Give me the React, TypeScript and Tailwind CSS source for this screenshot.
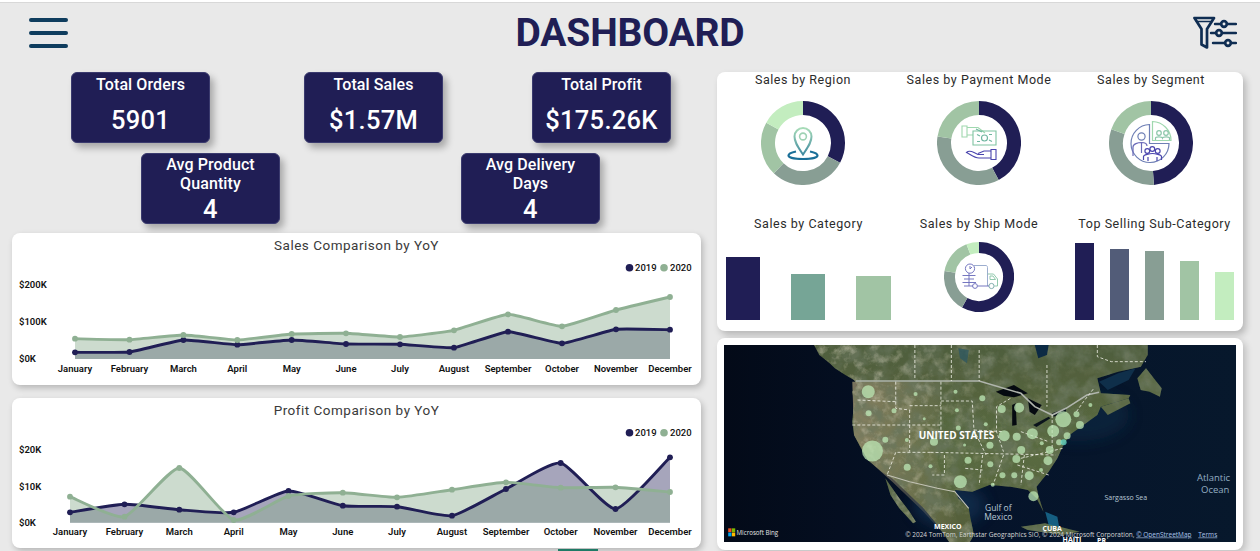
import React from "react";

const NAVY = "#201e55";
const GRAY = "#889e94";
const LIGHT = "#a1c4a4";
const PALE = "#c3edbf";
const FONT = "Roboto, 'Liberation Sans', sans-serif";

const MONTHS = ["January","February","March","April","May","June","July","August","September","October","November","December"];

function smooth(pts: number[][], t = 0.14) {
  let d = `M${pts[0][0]} ${pts[0][1]}`;
  for (let i = 0; i < pts.length - 1; i++) {
    const p0 = pts[Math.max(0, i - 1)], p1 = pts[i], p2 = pts[i + 1], p3 = pts[Math.min(pts.length - 1, i + 2)];
    d += `C${p1[0] + (p2[0] - p0[0]) * t} ${p1[1] + (p2[1] - p0[1]) * t} ${p2[0] - (p3[0] - p1[0]) * t} ${p2[1] - (p3[1] - p1[1]) * t} ${p2[0]} ${p2[1]}`;
  }
  return d;
}

type ChartProps = {
  title: string; vb: string; xs: number[]; a: number[]; b: number[]; base: number; tension: number;
  legendY: number; monthY: number; yLabels: [string, number][];
};

function LineChart({ title, vb, xs, a, b, base, tension, legendY, monthY, yLabels }: ChartProps) {
  const pa = xs.map((x, i) => [x, a[i]]);
  const pb = xs.map((x, i) => [x, b[i]]);
  const la = smooth(pa, tension), lb = smooth(pb, tension);
  const close = `L${xs[11]} ${base}L${xs[0]} ${base}Z`;
  const [, , w, h] = vb.split(" ").map(Number);
  return (
    <div className="bg-white rounded-lg shadow-[2px_3px_6px_rgba(0,0,0,0.22)] flex flex-col overflow-hidden">
      <div className="h-[24px] flex items-center justify-center text-[13.5px] tracking-[0.5px] text-[#3a3a3a]">{title}</div>
      <svg viewBox={vb} width={w} height={h} className="block">
        <path d={la + close} fill={NAVY} opacity={0.4} />
        <path d={lb + close} fill="#8fb093" opacity={0.45} />
        <path d={la} fill="none" stroke={NAVY} strokeWidth={2.9} />
        {pa.map((p, i) => <circle key={i} cx={p[0]} cy={p[1]} r={2.9} fill={NAVY} />)}
        <path d={lb} fill="none" stroke="#8fb093" strokeWidth={2.9} />
        {pb.map((p, i) => <circle key={i} cx={p[0]} cy={p[1]} r={2.9} fill="#8fb093" />)}
        <g fontFamily={FONT} fontSize={9.5} fontWeight={600} fill="#111">
          {yLabels.map(([t, y]) => <text key={t} x={19} y={y + 3}>{t}</text>)}
          {MONTHS.map((m, i) => <text key={m} x={xs[i]} y={monthY + 3} textAnchor="middle">{m}</text>)}
          <circle cx={629.5} cy={legendY} r={3.8} fill={NAVY} />
          <text x={635} y={legendY + 3.5} fontWeight={500}>2019</text>
          <circle cx={664} cy={legendY} r={3.8} fill="#8fb093" />
          <text x={670} y={legendY + 3.5} fontWeight={500}>2020</text>
        </g>
      </svg>
    </div>
  );
}

function arc(cx: number, cy: number, r: number, a0: number, a1: number) {
  const pt = (a: number) => [cx + r * Math.sin((a * Math.PI) / 180), cy - r * Math.cos((a * Math.PI) / 180)];
  const [x0, y0] = pt(a0), [x1, y1] = pt(a1);
  return `M${x0} ${y0}A${r} ${r} 0 ${a1 - a0 > 180 ? 1 : 0} 1 ${x1} ${y1}`;
}

function Donut({ size, stops, colors, width, children }: { size: number; stops: number[]; colors: string[]; width: number; children?: React.ReactNode }) {
  const c = size / 2, r = c - width / 2;
  return (
    <svg viewBox={`0 0 ${size} ${size}`} width={size} height={size} className="block">
      {colors.map((col, i) => (
        <path key={i} d={arc(c, c, r, stops[i], stops[i + 1])} fill="none" stroke={col} strokeWidth={width} />
      ))}
      {children}
    </svg>
  );
}

function Kpi({ title, value, tall }: { title: string; value: string; tall?: boolean }) {
  return (
    <div className={`w-[139px] h-[71px] rounded-md bg-[#201e55] border border-[#3a3a6e] shadow-[4px_5px_7px_rgba(0,0,0,0.28)] text-white text-center flex flex-col items-center ${tall ? "pt-[1px]" : "pt-[2px]"}`}>
      <div className="text-[16px] leading-[19px] font-medium tracking-[0.1px] w-[110px]">{title}</div>
      <div className={`text-[25.5px] leading-[32px] font-medium tracking-[0.3px] ${tall ? "" : "mt-[10px]"}`}>{value}</div>
    </div>
  );
}

function ChartTitle({ children }: { children: React.ReactNode }) {
  return <div className="h-[16px] flex items-center justify-center text-[12.5px] tracking-[0.55px] whitespace-nowrap text-[#2b2b2b]">{children}</div>;
}

function PinIcon() {
  return (
    <g fill="none">
      <defs>
        <linearGradient id="pg" x1="0" y1="0" x2="0" y2="1">
          <stop offset="0" stopColor="#a8dcb8" />
          <stop offset="1" stopColor="#3f8aa0" />
        </linearGradient>
      </defs>
      <path d="M42 53.5C37 46 33.5 41.5 33.5 35.5A8.5 8.5 0 0 1 50.5 35.5C50.5 41.5 47 46 42 53.5Z" stroke="url(#pg)" strokeWidth={2} />
      <circle cx={42} cy={35.5} r={3.4} stroke="#9fd2b4" strokeWidth={1.6} />
      <path d="M35 50.5C30 51.5 27.5 52.8 27.5 54.5C27.5 56.8 34 58 42 58S56.5 56.8 56.5 54.5C56.5 52.8 54 51.5 49 50.5" stroke="#1a6f98" strokeWidth={2.2} />
    </g>
  );
}

function MoneyIcon() {
  return (
    <g fill="none" strokeWidth={1.1}>
      <path d="M25 25H30V36H25ZM30 26.5H41L48 32M30 34H36" stroke="#9fd8ae" />
      <path d="M36 30H59V44H36Z" stroke="#7fc4a2" />
      <circle cx={47.5} cy={37} r={3} stroke="#6fb6a0" />
      <path d="M40 33.5L43 35M55 40.5L52 39M40 40.5H43M52 33.5H55M39 28L45 31" stroke="#6fb6a0" />
      <path d="M54 48.5H59V58.5H54ZM54 50H47L41 52.5M54 57H42C37 57 33 53 29.5 51.5C31 50 34 50 37 51.5L41 53.5H47" stroke="#4a45ae" />
    </g>
  );
}

function SegmentIcon() {
  return (
    <g fill="none" strokeWidth={1.2}>
      <path d="M40.5 23.5A19 19 0 1 0 60 42.5H40.5Z" stroke="#6e7fb5" />
      <path d="M43.5 20.5V39.5H62A19 19 0 0 0 43.5 20.5Z" stroke="#9fd8ae" />
      <circle cx={32.5} cy={35.5} r={3.6} stroke="#6e7fb5" />
      <path d="M24 55V46C24 43 29 41.5 32.5 41.5C36 41.5 38 43 38 45M32.5 41.5V52" stroke="#6a6ab8" />
      <circle cx={50} cy={32} r={2.3} stroke="#8cc6aa" /><circle cx={57} cy={32} r={2.3} stroke="#8cc6aa" />
      <path d="M46.5 39V37C46.5 35.5 53 35.5 53.5 37C54 35.5 60.5 35.5 60.5 37V39" stroke="#8cc6aa" />
      <circle cx={38.3} cy={50} r={2.4} stroke="#4a45ae" /><circle cx={43.3} cy={48} r={2.4} stroke="#4a45ae" /><circle cx={48.7} cy={50} r={2.4} stroke="#4a45ae" />
      <path d="M34.5 59V55.5C34.5 54 41 52.5 43.5 52.5C46 52.5 52.5 54 52.5 55.5V59" stroke="#4a45ae" />
      <path d="M39 60V56M48 60V56" stroke="#4a45ae" />
    </g>
  );
}

function TruckIcon() {
  return (
    <g fill="none" strokeWidth={0.95} stroke="#6e70bd">
      <circle cx={26} cy={26.6} r={4.6} />
      <path d="M26 24V27L28 25" />
      <path d="M18.5 33.5H31.5M20 37H30M18.5 40.5H32M25 31V44M20 44H29" />
      <path d="M30 23.5H42C43 23.5 43.5 24.5 43.5 25.5V44" stroke="#97a9cc" />
      <path d="M43.5 32H49.5L53.5 37V44H50.5" stroke="#8cc6aa" />
      <path d="M46 34H49L51.5 37.5H46Z" stroke="#8cc6aa" />
      <circle cx={31} cy={44} r={2.4} />
      <circle cx={47.5} cy={44} r={2.6} stroke="#7aa8a8" />
      <path d="M33.5 44H45" />
    </g>
  );
}

const BUBBLES: [number, number, number][] = [
  [441,170,6.5],[453,348,10.5],[706,440,6.5],[1002,253,8],[832,302,5.5],[913,296,5.5],[973,288,6],[916,484,5],[875,218,5],[825,222,4],
  [868,305,4],[881,345,4],[963,345,4],[958,377,4.5],[867,372,4],[904,422,4.5],[728,376,3.5],[553,397,3.5],[630,320,4],[791,331,3.5],
  [792,388,3],[827,421,3],[861,421,3],[490,314,3],[442,235,3],[515,227,2.5],[577,177,2],[692,170,2],[769,190,3],[696,226,2],[602,251,1.5],
  [700,279,2.5],[779,268,2],[552,315,2],[620,394,2],[1040,238,3],[1050,270,4],[1013,302,3.5],[990,322,3],[1080,210,2],[938,405,2],[799,449,2],[940,325,2],[718,330,1.5],
];
const zx = (x: number) => 715 + x / 2.877 - 724;
const zy = (y: number) => 335 + y / 3 - 345;
const MAP_T = `translate(${zx(0)} ${zy(0)}) scale(${1 / 2.877} ${1 / 3})`;

const LAND = "285,30 300,60 330,85 345,100 375,120 400,135 410,150 395,170 400,200 395,260 400,300 420,340 440,375 480,410 510,430 560,480 600,520 640,570 675,623 732,623 745,600 735,550 730,520 700,490 690,465 740,470 790,450 850,455 900,465 925,490 945,530 930,480 925,455 960,410 985,370 1000,335 1020,300 1060,270 1100,240 1110,215 1190,190 1195,180 1110,175 1100,130 1160,110 1225,95 1245,60 1245,30";
const EXTRA = [
  "490,430 530,490 560,530 578,560 570,565 530,520 505,480",
  "1215,130 1240,100 1285,160 1280,185 1250,170 1225,165",
  "1110,215 1190,190 1195,205 1130,240",
  "880,575 950,565 1050,590 1000,600 900,585",
];
const STATES = [
  "575,30 575,135","680,30 680,138","760,45 760,138","955,90 955,215","1100,30 1100,65 1140,80 1240,80",
  "520,140 520,220 560,225","650,140 650,285","410,195 520,200","650,198 740,198 745,285","560,212 650,212","395,270 650,270",
  "560,225 560,350","745,285 780,360","620,352 980,360","525,352 620,352","520,352 495,420","660,360 660,420 625,420","770,360 760,450",
  "830,360 800,450","890,360 880,450","850,190 810,215 810,290 830,350","970,240 970,340","1000,340 880,370","870,390 960,420","720,400 770,405",
  "745,285 830,290","880,290 960,320","1040,230 1060,200 1090,160",
];

function MapView() {
  return (
    <svg viewBox="0 0 512 197" width={512} height={197} className="block">
      <defs>
        <linearGradient id="sea" x1="0" y1="0" x2="1" y2="0">
          <stop offset="0" stopColor="#030a18" />
          <stop offset="0.5" stopColor="#05132a" />
          <stop offset="1" stopColor="#07182c" />
        </linearGradient>
        <linearGradient id="landg" x1="0" y1="0" x2="0" y2="1">
          <stop offset="0" stopColor="#4f5d3c" />
          <stop offset="0.55" stopColor="#5a6b40" />
          <stop offset="1" stopColor="#525c38" />
        </linearGradient>
        <linearGradient id="west" x1="0" y1="0" x2="1" y2="0">
          <stop offset="0" stopColor="#8f8568" stopOpacity="0.85" />
          <stop offset="1" stopColor="#8f8568" stopOpacity="0" />
        </linearGradient>
        <linearGradient id="maskg" x1="0" y1="0" x2="1" y2="0">
          <stop offset="0.15" stopColor="#fff" />
          <stop offset="0.5" stopColor="#fff" stopOpacity="0.35" />
          <stop offset="0.75" stopColor="#fff" stopOpacity="0.1" />
        </linearGradient>
        <mask id="westmask">
          <rect width={512} height={197} fill="url(#maskg)" />
        </mask>
        <filter id="soft" x="-5%" y="-5%" width="110%" height="110%">
          <feGaussianBlur stdDeviation="0.5" />
        </filter>
        <filter id="glow" x="-30%" y="-30%" width="160%" height="160%">
          <feGaussianBlur stdDeviation="7" />
        </filter>
        <filter id="noiseDark" x="0" y="0" width="100%" height="100%">
          <feTurbulence type="fractalNoise" baseFrequency="0.055" numOctaves={4} seed={7} />
          <feColorMatrix values="0 0 0 0 0.14  0 0 0 0 0.18  0 0 0 0 0.11  2.6 0 0 0 -1" />
        </filter>
        <filter id="noiseLight" x="0" y="0" width="100%" height="100%">
          <feTurbulence type="fractalNoise" baseFrequency="0.1" numOctaves={4} seed={21} />
          <feColorMatrix values="0 0 0 0 0.74  0 0 0 0 0.69  0 0 0 0 0.55  2.6 0 0 0 -1.25" />
        </filter>
        <clipPath id="landclip">
          <polygon points={LAND} transform={MAP_T} />
          {EXTRA.map((p) => <polygon key={p} points={p} transform={MAP_T} />)}
        </clipPath>
      </defs>
      <rect width={512} height={197} fill="url(#sea)" />
      <g filter="url(#glow)" opacity={0.6}>
        <ellipse cx={225} cy={160} rx={36} ry={22} fill="#12385a" />
        <ellipse cx={355} cy={70} rx={50} ry={26} fill="#0c2a44" />
      </g>
      <g transform={MAP_T} filter="url(#soft)">
        <polygon points={LAND} fill="url(#landg)" />
        <polygon points="395,140 650,140 640,380 720,623 680,623 600,530 510,440 440,375 400,300" fill="url(#west)" />
        {EXTRA.map((p) => <polygon key={p} points={p} fill="#5b6a46" />)}
      </g>
      <g clipPath="url(#landclip)">
        <rect width={512} height={197} filter="url(#noiseDark)" opacity={0.8} />
        <g mask="url(#westmask)">
          <rect width={512} height={197} filter="url(#noiseLight)" opacity={0.6} />
        </g>
      </g>
      <g transform={MAP_T}>
        <polygon points="950,530 985,545 990,575 960,570" fill="#1f7ea6" opacity={0.7} filter="url(#soft)" />
        <polygon points="920,30 960,30 955,60 930,70" fill="#0c2a44" />
        <polygon points="700,40 730,45 725,85 705,70" fill="#2a5562" opacity={0.7} />
        <polygon points="1105,140 1160,115 1210,100 1190,135 1130,165" fill="#0f2f4a" />
        <polygon points="808,170 860,150 900,175 860,187 830,182" fill="#050a10" />
        <polygon points="855,210 865,205 868,270 855,272" fill="#050a10" />
        <polygon points="900,190 940,210 920,240 905,230" fill="#050a10" />
        <polygon points="915,270 960,245 965,250 925,276" fill="#0b141c" />
        <polygon points="970,235 1010,220 1010,230 975,245" fill="#0b141c" />
        <polyline points="405,138 760,138 880,175 920,215 970,240 1010,220 1070,180 1105,172" fill="none" stroke="#b0b5ad" strokeWidth={1.6} vectorEffect="non-scaling-stroke" />
        <polyline points="495,420 560,440 640,460 690,470 730,520" fill="none" stroke="#c3c3b5" strokeWidth={1.1} vectorEffect="non-scaling-stroke" />
        {STATES.map((s) => (
          <polyline key={s} points={s} fill="none" stroke="#f2f2ea" strokeWidth={0.8} strokeDasharray="3 2" vectorEffect="non-scaling-stroke" />
        ))}
      </g>
      {BUBBLES.map(([x, y, r], i) => (
        <circle key={i} cx={zx(x)} cy={zy(y)} r={r} fill="#bde8b5" opacity={0.75} />
      ))}
      <circle cx={zx(1003)} cy={zy(322)} r={3} fill="#63d2c0" opacity={0.8} />
      <g fontFamily="'Open Sans', 'Liberation Sans', sans-serif">
        <text x={zx(695)} y={zy(301) + 3.5} textAnchor="middle" fontSize={10} fontWeight={700} fill="#fff">UNITED STATES</text>
        <text x={zx(815)} y={zy(518) + 3} textAnchor="middle" fontSize={8.5} fill="#b9c9d6">Gulf of</text>
        <text x={zx(815)} y={zy(546) + 3} textAnchor="middle" fontSize={8.5} fill="#b9c9d6">Mexico</text>
        <text x={zx(1182)} y={zy(488) + 2.5} textAnchor="middle" fontSize={7} fill="#b9c9d6">Sargasso Sea</text>
        <text x={zx(1482)} y={zy(428) + 3.5} textAnchor="end" fontSize={9.5} fill="#93adc2">Atlantic</text>
        <text x={zx(1480)} y={zy(462) + 3.5} textAnchor="end" fontSize={9.5} fill="#93adc2">Ocean</text>
        <text x={zx(670)} y={zy(575) + 2.5} textAnchor="middle" fontSize={7} fontWeight={700} fill="#fff">MEXICO</text>
        <text x={zx(970)} y={zy(581) + 2.5} textAnchor="middle" fontSize={7} fontWeight={700} fill="#fff">CUBA</text>
        <text x={zx(1027)} y={zy(613) + 2.5} textAnchor="middle" fontSize={7} fontWeight={700} fill="#fff">HAITI</text>
        <text x={zx(1112)} y={zy(617) + 2.5} textAnchor="middle" fontSize={7} fontWeight={700} fill="#fff">PR</text>
        <text x={zx(62)} y={zy(592) + 2.5} fontSize={6.2} fill="#e6e6e6">Microsoft Bing</text>
        <text x={zx(547)} y={zy(598) + 2.2} fontSize={6.5} fill="#d5d5d5">© 2024 TomTom, Earthstar Geographics SIO, © 2024 Microsoft Corporation, <tspan fill="#aac4ea" textDecoration="underline">© OpenStreetMap</tspan>  <tspan dx={5} fill="#aac4ea" textDecoration="underline">Terms</tspan></text>
      </g>
      <rect x={zx(38)} y={zy(580)} width={3.3} height={3.8} fill="#f25022" />
      <rect x={zx(38) + 3.7} y={zy(580)} width={3.3} height={3.8} fill="#7fba00" />
      <rect x={zx(38)} y={zy(580) + 4.2} width={3.3} height={3.8} fill="#00a4ef" />
      <rect x={zx(38) + 3.7} y={zy(580) + 4.2} width={3.3} height={3.8} fill="#ffb900" />
    </svg>
  );
}

export default function App() {
  return (
    <div className="relative w-[1260px] h-[551px] overflow-hidden bg-[#e9e9e9]" style={{ fontFamily: FONT }}>
      <div className="h-[3px] bg-white border-b border-[#d8d8d8]" />
      <header className="h-[69px] grid grid-cols-[1fr_auto_1fr] items-center pb-[10px]">
        <div className="pl-[29px] flex flex-col gap-[9px]">
          <div className="w-[39px] h-[4px] rounded-full bg-[#0f3d5e]" />
          <div className="w-[39px] h-[4px] rounded-full bg-[#0f3d5e]" />
          <div className="w-[39px] h-[4px] rounded-full bg-[#0f3d5e]" />
        </div>
        <h1 className="text-[39px] leading-[44px] font-bold text-[#201e55] tracking-[-0.2px]">DASHBOARD</h1>
        <div className="flex justify-end pr-[23px]">
          <svg viewBox="0 0 44 34" width={44} height={34} fill="none" stroke="#0f2d52" strokeWidth={2.7} strokeLinejoin="round" strokeLinecap="round">
            <path d="M1.5 2H21L14 13V31.5L8.5 28.5V13Z" />
            <path d="M3.5 5.5H19" strokeWidth={1.6} />
            <path d="M22 8H43M18 17H43M20 27H43" strokeWidth={2.4} />
            <circle cx={31} cy={8} r={2.8} fill="#e9e9e9" />
            <circle cx={26} cy={17} r={2.8} fill="#e9e9e9" />
            <circle cx={35} cy={27} r={2.8} fill="#e9e9e9" />
          </svg>
        </div>
      </header>

      <main className="flex pl-[12px]">
        <section className="w-[689px] flex flex-col">
          <div className="flex pl-[59px]">
            <Kpi title="Total Orders" value="5901" />
            <div className="ml-[94px]"><Kpi title="Total Sales" value="$1.57M" /></div>
            <div className="ml-[89px]"><Kpi title="Total Profit" value="$175.26K" /></div>
          </div>
          <div className="flex pl-[129px] mt-[10px]">
            <Kpi tall title="Avg Product Quantity" value="4" />
            <div className="ml-[181px]"><Kpi tall title="Avg Delivery Days" value="4" /></div>
          </div>
          <div className="mt-[9px]">
            <LineChart
              title="Sales Comparison by YoY"
              vb="12 257 689 128"
              xs={[75,129.5,183.4,237.3,291.7,346,400,454,508,562,616,670]}
              a={[352.3,352,340,344.7,340,344,344.3,347.7,331.7,343.3,329.3,329.7]}
              b={[338.7,339.7,335,340,334,333.3,337,330.3,314.3,326.3,310,297]}
              base={359}
              tension={0.06}
              legendY={267.7}
              monthY={369}
              yLabels={[["$200K",284.5],["$100K",321.5],["$0K",359]]}
            />
          </div>
          <div className="mt-[13px]">
            <LineChart
              title="Profit Comparison by YoY"
              vb="12 422 689 126"
              xs={[70,124.5,179.3,233.7,288.5,342.8,397,452,506,560.7,615.5,670]}
              a={[512.3,504.3,509.7,512.3,491,505.7,506.7,515.7,489,463,509,457.3]}
              b={[496.7,516.7,468,520,496,492.7,497.3,489.7,482.3,487.7,487.3,492]}
              base={522.7}
              tension={0.09}
              legendY={432.7}
              monthY={532}
              yLabels={[["$20K",449.5],["$10K",486.5],["$0K",522.7]]}
            />
          </div>
        </section>

        <section className="ml-[16px] w-[526px] flex flex-col">
          <div className="h-[259px] bg-white rounded-lg shadow-[3px_4px_7px_rgba(0,0,0,0.22)]">
            <div className="flex">
              <div className="w-[172px] flex flex-col items-center">
                <ChartTitle>Sales by Region</ChartTitle>
                <div className="mt-[13px]"><Donut size={84} width={14} stops={[0,118,224,299,360]} colors={[NAVY,GRAY,LIGHT,PALE]}><PinIcon /></Donut></div>
              </div>
              <div className="w-[180px] flex flex-col items-center">
                <ChartTitle>Sales by Payment Mode</ChartTitle>
                <div className="mt-[13px]"><Donut size={84} width={14} stops={[0,152,279,360]} colors={[NAVY,GRAY,LIGHT]}><MoneyIcon /></Donut></div>
              </div>
              <div className="w-[164px] flex flex-col items-center">
                <ChartTitle>Sales by Segment</ChartTitle>
                <div className="mt-[13px]"><Donut size={84} width={14} stops={[0,176,289,360]} colors={[NAVY,GRAY,LIGHT]}><SegmentIcon /></Donut></div>
              </div>
            </div>
            <div className="flex mt-[31px] pl-[9px]">
              <div className="w-[165px]">
                <ChartTitle>Sales by Category</ChartTitle>
                <div className="mt-[8px] h-[80px] flex items-end justify-between">
                  <div className="w-[34px] h-[63px] bg-[#201e55]" />
                  <div className="w-[34px] h-[46px] bg-[#76a596]" />
                  <div className="w-[35px] h-[44px] bg-[#a1c4a4]" />
                </div>
              </div>
              <div className="w-[176px] flex flex-col items-center">
                <ChartTitle>Sales by Ship Mode</ChartTitle>
                <div className="mt-[10px]"><Donut size={70} width={11} stops={[0,209,280,339,360]} colors={[NAVY,GRAY,LIGHT,PALE]}><TruckIcon /></Donut></div>
              </div>
              <div className="ml-[8px] w-[159px]">
                <ChartTitle>Top Selling Sub-Category</ChartTitle>
                <div className="mt-[8px] h-[80px] flex items-end justify-between">
                  <div className="w-[19px] h-[77px] bg-[#201e55]" />
                  <div className="w-[19px] h-[71px] bg-[#525c78]" />
                  <div className="w-[19px] h-[69px] bg-[#889e94]" />
                  <div className="w-[19px] h-[59px] bg-[#a1c4a4]" />
                  <div className="w-[19px] h-[48px] bg-[#c3edbf]" />
                </div>
              </div>
            </div>
          </div>
          <div className="mt-[7px] h-[212px] bg-white rounded-lg shadow-[3px_3px_7px_rgba(0,0,0,0.18)] px-[7px] pt-[7px]">
            <MapView />
          </div>
        </section>
      </main>
      <div className="absolute left-[558px] bottom-0 w-[40px] h-[2px] bg-[#1f7a66]" />
    </div>
  );
}
